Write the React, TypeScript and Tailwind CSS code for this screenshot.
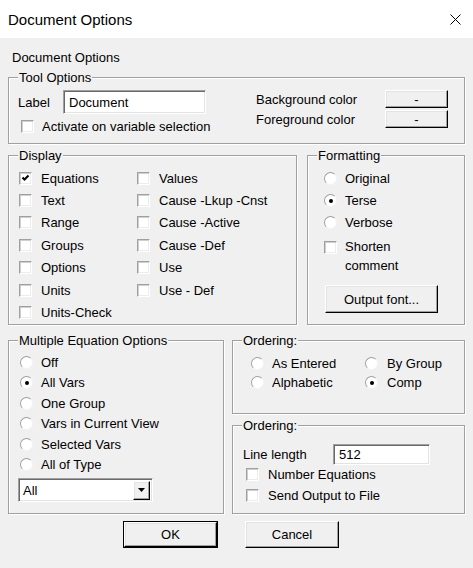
import React from "react";

function Group({ label, className, children }: { label: string; className: string; children?: React.ReactNode }) {
  return (
    <div className={`relative border border-[#a0a0a0] shadow-[inset_1px_1px_0_#ffffff,1px_1px_0_#ffffff] ${className}`}>
      <span className="absolute -top-[8px] left-[9px] px-[1px] bg-[#f0f0f0] leading-[15px] whitespace-nowrap">{label}</span>
      {children}
    </div>
  );
}

function Check({ checked = false }: { checked?: boolean }) {
  return (
    <span className="relative inline-flex items-center justify-center w-[13px] h-[13px] shrink-0 bg-white border border-t-[#a0a0a0] border-l-[#a0a0a0] border-r-white border-b-white shadow-[inset_1px_1px_0_#cfcfcf,inset_-1px_-1px_0_#ececec]">
      {checked && (
        <svg width="11" height="11" viewBox="0 0 11 11">
          <path d="M2.5 4.5 L4.5 6.5 L8.5 2.5" fill="none" stroke="#000" strokeWidth="2" />
        </svg>
      )}
    </span>
  );
}

function Radio({ on = false }: { on?: boolean }) {
  return (
    <span className="inline-flex items-center justify-center w-[13px] h-[13px] shrink-0 rounded-full bg-white border border-t-[#a0a0a0] border-l-[#a0a0a0] border-r-[#f4f4f4] border-b-[#f4f4f4]">
      {on && <span className="w-[4px] h-[4px] rounded-full bg-black" />}
    </span>
  );
}

function Btn({ children, className }: { children: React.ReactNode; className: string }) {
  return (
    <div className={`flex items-center justify-center bg-[#f0f0f0] border border-t-white border-l-white border-r-black border-b-black shadow-[inset_-1px_-1px_0_#a0a0a0,inset_1px_1px_0_#e3e3e3] ${className}`}>
      {children}
    </div>
  );
}

function Sunken({ children, className }: { children?: React.ReactNode; className: string }) {
  return (
    <div className={`flex items-center bg-white border border-t-[#a0a0a0] border-l-[#a0a0a0] border-r-white border-b-white shadow-[inset_1px_1px_0_#696969,inset_-1px_-1px_0_#e3e3e3] ${className}`}>
      {children}
    </div>
  );
}

function CheckRow({ label, checked = false }: { label: string; checked?: boolean }) {
  return (
    <div className="flex items-center h-[22.4px]">
      <Check checked={checked} />
      <span className="ml-[9px] whitespace-nowrap">{label}</span>
    </div>
  );
}

export default function App() {
  return (
    <div className="w-[473px] h-[568px] overflow-hidden bg-[#f0f0f0] text-black text-[13px] leading-[15px] font-['Liberation_Sans',Arial,sans-serif]">
      <div className="h-[38px] bg-white flex items-center justify-between pl-[8px] pr-[12px]">
        <span className="text-[15px]">Document Options</span>
        <svg width="11" height="11" viewBox="0 0 11 11">
          <path d="M0.5 0.5 L10.5 10.5 M10.5 0.5 L0.5 10.5" stroke="#000" strokeWidth="1" />
        </svg>
      </div>

      <div className="px-[8px]">
        <div className="mt-[12px] pl-[4px]">Document Options</div>

        <Group label="Tool Options" className="mt-[12px] w-[457px] h-[67px]">
          <div className="flex pl-[9px] pt-[12px]">
            <div className="w-[238px]">
              <div className="flex items-center h-[24px]">
                <span className="w-[45px]">Label</span>
                <Sunken className="w-[143px] h-[24px] pl-[5px]">Document</Sunken>
              </div>
              <div className="flex items-center mt-[5px] pl-[3px] h-[15px]">
                <Check />
                <span className="ml-[8px] whitespace-nowrap">Activate on variable selection</span>
              </div>
            </div>
            <div className="flex flex-col gap-[2px]">
              <div className="flex items-center h-[18px]">
                <span className="w-[129px] whitespace-nowrap">Background color</span>
                <Btn className="w-[63px] h-[18px]">-</Btn>
              </div>
              <div className="flex items-center h-[18px]">
                <span className="w-[129px] whitespace-nowrap">Foreground color</span>
                <Btn className="w-[63px] h-[18px]">-</Btn>
              </div>
            </div>
          </div>
        </Group>

        <div className="flex gap-[10px] mt-[11px]">
          <Group label="Display" className="w-[289px] h-[170px]">
            <div className="flex pl-[10px] pt-[11px]">
              <div className="w-[118px]">
                <CheckRow label="Equations" checked />
                <CheckRow label="Text" />
                <CheckRow label="Range" />
                <CheckRow label="Groups" />
                <CheckRow label="Options" />
                <CheckRow label="Units" />
                <CheckRow label="Units-Check" />
              </div>
              <div>
                <CheckRow label="Values" />
                <CheckRow label="Cause -Lkup -Cnst" />
                <CheckRow label="Cause -Active" />
                <CheckRow label="Cause -Def" />
                <CheckRow label="Use" />
                <CheckRow label="Use - Def" />
              </div>
            </div>
          </Group>

          <Group label="Formatting" className="w-[158px] h-[170px]">
            <div className="pl-[16px] pt-[11px]">
              {["Original", "Terse", "Verbose"].map((t) => (
                <div key={t} className="flex items-center h-[22.4px]">
                  <Radio on={t === "Terse"} />
                  <span className="ml-[8px]">{t}</span>
                </div>
              ))}
              <div className="flex items-start mt-[3px]">
                <span className="mt-[4px]">
                  <Check />
                </span>
                <span className="ml-[8px] leading-[19px]">
                  Shorten
                  <br />
                  comment
                </span>
              </div>
              <Btn className="mt-[10px] ml-[1px] w-[113px] h-[28px]">Output font...</Btn>
            </div>
          </Group>
        </div>

        <div className="flex gap-[8px] mt-[15px]">
          <Group label="Multiple Equation Options" className="w-[216px] h-[174px]">
            <div className="pl-[9px] pt-[11px]">
              {["Off", "All Vars", "One Group", "Vars in Current View", "Selected Vars", "All of Type"].map((t) => (
                <div key={t} className="flex items-center h-[20.5px] pl-[2px]">
                  <Radio on={t === "All Vars"} />
                  <span className="ml-[8px] whitespace-nowrap">{t}</span>
                </div>
              ))}
              <Sunken className="mt-[3px] w-[135px] h-[24px] pl-[4px] pr-[2px] justify-between">
                <span>All</span>
                <Btn className="w-[17px] h-[19px]">
                  <svg width="7" height="4" viewBox="0 0 7 4">
                    <path d="M0 0 H7 L3.5 4 Z" fill="#000" />
                  </svg>
                </Btn>
              </Sunken>
            </div>
          </Group>

          <div className="flex flex-col">
            <Group label="Ordering:" className="w-[233px] h-[74px]">
              <div className="pl-[18px] pt-[13px] flex">
                <div className="w-[114px]">
                  <div className="flex items-center h-[19px]">
                    <Radio />
                    <span className="ml-[8px]">As Entered</span>
                  </div>
                  <div className="flex items-center h-[19px]">
                    <Radio />
                    <span className="ml-[8px]">Alphabetic</span>
                  </div>
                </div>
                <div>
                  <div className="flex items-center h-[19px]">
                    <Radio />
                    <span className="ml-[9px]">By Group</span>
                  </div>
                  <div className="flex items-center h-[19px]">
                    <Radio on />
                    <span className="ml-[9px]">Comp</span>
                  </div>
                </div>
              </div>
            </Group>
            <Group label="Ordering:" className="mt-[11px] w-[233px] h-[89px]">
              <div className="pl-[10px] pt-[18px]">
                <div className="flex items-center h-[21px]">
                  <span className="w-[90px]">Line length</span>
                  <Sunken className="w-[97px] h-[21px] pl-[5px]">512</Sunken>
                </div>
                <div className="flex items-center h-[18px] pl-[3px]">
                  <Check />
                  <span className="ml-[9px]">Number Equations</span>
                </div>
                <div className="flex items-center h-[18px] mt-[3px] pl-[3px]">
                  <Check />
                  <span className="ml-[9px]">Send Output to File</span>
                </div>
              </div>
            </Group>
          </div>
        </div>

        <div className="flex gap-[27px] mt-[7px] pl-[115px]">
          <div className="border border-black">
            <Btn className="w-[93px] h-[25px]">OK</Btn>
          </div>
          <Btn className="w-[94px] h-[27px]">Cancel</Btn>
        </div>
      </div>
    </div>
  );
}
